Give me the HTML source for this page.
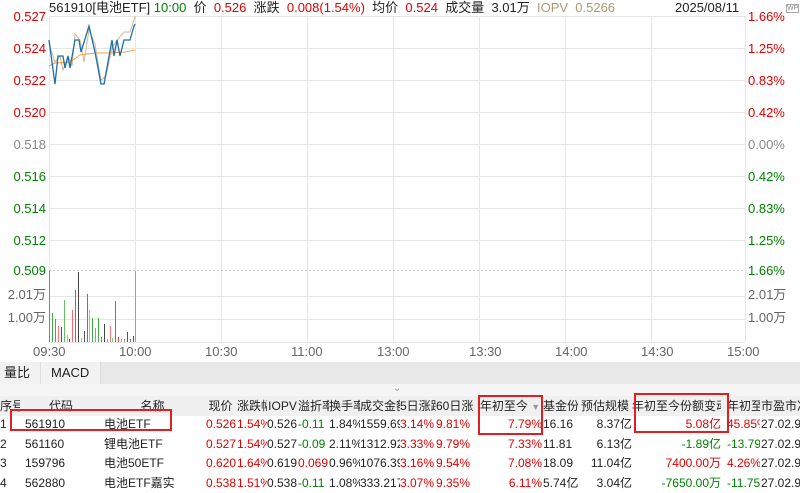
<!DOCTYPE html>
<html><head><meta charset="utf-8"><style>
body{margin:0;width:800px;height:488px;overflow:hidden;background:#fff;font-family:"Liberation Sans","Noto Sans CJK SC",sans-serif;position:relative}
.a{position:absolute;white-space:nowrap;font-size:12px;line-height:14px}
.l{position:absolute;white-space:nowrap;font-size:13px;line-height:14px;width:46px;text-align:right;left:0}
.r{color:#e00000}.g{color:#008000}.k{color:#222}.gy{color:#666}
.c{position:absolute;overflow:hidden;white-space:nowrap;font-size:12px;height:19px;line-height:19px}
</style></head><body>
<svg width="800" height="362" style="position:absolute;left:0;top:0">
<g stroke="#e6e6e6" stroke-width="1">
<line x1="49" y1="16.5" x2="745" y2="16.5"/><line x1="49" y1="48.5" x2="745" y2="48.5"/><line x1="49" y1="80.5" x2="745" y2="80.5"/><line x1="49" y1="112.5" x2="745" y2="112.5"/><line x1="49" y1="144.5" x2="745" y2="144.5"/><line x1="49" y1="176.5" x2="745" y2="176.5"/><line x1="49" y1="208.5" x2="745" y2="208.5"/><line x1="49" y1="240.5" x2="745" y2="240.5"/>
<line x1="49" y1="296.5" x2="745" y2="296.5"/><line x1="49" y1="319.5" x2="745" y2="319.5"/><line x1="49" y1="342.5" x2="745" y2="342.5"/>
<line x1="49.5" y1="16" x2="49.5" y2="342"/><line x1="135.5" y1="16" x2="135.5" y2="342"/><line x1="221.5" y1="16" x2="221.5" y2="342"/><line x1="307.5" y1="16" x2="307.5" y2="342"/><line x1="393.5" y1="16" x2="393.5" y2="342"/><line x1="479.5" y1="16" x2="479.5" y2="342"/><line x1="565.5" y1="16" x2="565.5" y2="342"/><line x1="651.5" y1="16" x2="651.5" y2="342"/><line x1="745.5" y1="16" x2="745.5" y2="342"/>
</g>
<line x1="49" y1="270.5" x2="745" y2="270.5" stroke="#ccc" stroke-dasharray="2,2"/>
<polyline fill="none" stroke="#ccb89a" stroke-width="1" points="49,44 55,62 60,56 63,70 68,56 72,66 75,34 80,40 84,62 89,30 95,44 101,80 106,76 112,48 117,40 124,32 130,32 134,20 135,16"/>
<polyline fill="none" stroke="#f5a040" stroke-width="1" points="49,66 55,63 70,62 80,55 95,53 110,53 125,52 135,50"/>
<polyline fill="none" stroke="#1f6fa8" stroke-width="1.3" points="49,40 55,84 58,56 63,56 65,68 68,56 70,68 75,40 79,40 81,52 89,26 95,52 101,84 104,84 112,40 114,56 117,40 120,56 124,40 130,40 134,26 135,24"/>
<g stroke-width="1">
<line x1="49.5" y1="342" x2="49.5" y2="271" stroke="#e55"/>
<line x1="52.5" y1="342" x2="52.5" y2="313" stroke="#4a4"/>
<line x1="55.5" y1="342" x2="55.5" y2="319" stroke="#4a4"/>
<line x1="58.5" y1="342" x2="58.5" y2="326" stroke="#f77"/>
<line x1="61.5" y1="342" x2="61.5" y2="327" stroke="#555"/>
<line x1="64.5" y1="342" x2="64.5" y2="300" stroke="#6b6"/>
<line x1="67.5" y1="342" x2="67.5" y2="335" stroke="#f99"/>
<line x1="69.5" y1="342" x2="69.5" y2="339" stroke="#555"/>
<line x1="72.5" y1="342" x2="72.5" y2="310" stroke="#f66"/>
<line x1="75.5" y1="342" x2="75.5" y2="290" stroke="#e44"/>
<line x1="78.5" y1="342" x2="78.5" y2="272" stroke="#444"/>
<line x1="81.5" y1="342" x2="81.5" y2="338" stroke="#8c8"/>
<line x1="84.5" y1="342" x2="84.5" y2="331" stroke="#555"/>
<line x1="87.5" y1="342" x2="87.5" y2="294" stroke="#e44"/>
<line x1="89.5" y1="342" x2="89.5" y2="310" stroke="#f99"/>
<line x1="92.5" y1="342" x2="92.5" y2="318" stroke="#4a4"/>
<line x1="95.5" y1="342" x2="95.5" y2="328" stroke="#6b6"/>
<line x1="98.5" y1="342" x2="98.5" y2="318" stroke="#4a4"/>
<line x1="101.5" y1="342" x2="101.5" y2="337" stroke="#4a4"/>
<line x1="104.5" y1="342" x2="104.5" y2="324" stroke="#444"/>
<line x1="107.5" y1="342" x2="107.5" y2="339" stroke="#f77"/>
<line x1="110.5" y1="342" x2="110.5" y2="326" stroke="#f77"/>
<line x1="112.5" y1="342" x2="112.5" y2="338" stroke="#8c8"/>
<line x1="115.5" y1="342" x2="115.5" y2="301" stroke="#777"/>
<line x1="118.5" y1="342" x2="118.5" y2="337" stroke="#e44"/>
<line x1="121.5" y1="342" x2="121.5" y2="339" stroke="#f77"/>
<line x1="124.5" y1="342" x2="124.5" y2="339" stroke="#6b6"/>
<line x1="127.5" y1="342" x2="127.5" y2="332" stroke="#555"/>
<line x1="130.5" y1="342" x2="130.5" y2="339" stroke="#777"/>
<line x1="133.5" y1="342" x2="133.5" y2="336" stroke="#555"/>
<line x1="135.5" y1="342" x2="135.5" y2="271" stroke="#f77"/>
</g>
</svg>
<div class="a" style="left:49px;top:1px;font-size:13px"><span class="k">561910[电池ETF]</span> <span class="g">10:00</span> &nbsp;<span class="k">价</span> &nbsp;<span class="r">0.526</span> &nbsp;<span class="k">涨跌</span> &nbsp;<span class="r">0.008(1.54%)</span> &nbsp;<span class="k">均价</span> &nbsp;<span class="r">0.524</span> &nbsp;<span class="k">成交量</span> &nbsp;<span class="k">3.01万</span> &nbsp;<span style="color:#b09a70">IOPV &nbsp;0.5266</span></div>
<div class="a k" style="left:675px;top:1px;font-size:13px">2025/08/11</div>
<div class="a" style="left:786px;top:4px;font-size:7px;color:#888;border:1px solid #aaa;line-height:7px">WP</div>
<div class="l r" style="top:10px">0.527</div>
<div class="l r" style="top:42px">0.524</div>
<div class="l r" style="top:74px">0.522</div>
<div class="l r" style="top:106px">0.520</div>
<div class="l" style="top:138px;color:#888">0.518</div>
<div class="l g" style="top:170px">0.516</div>
<div class="l g" style="top:202px">0.514</div>
<div class="l g" style="top:234px">0.512</div>
<div class="l g" style="top:264px">0.509</div>
<div class="l gy" style="top:288px">2.01万</div>
<div class="l gy" style="top:311px">1.00万</div>
<div class="a r" style="left:748px;top:10px;font-size:13px">1.66%</div>
<div class="a r" style="left:748px;top:42px;font-size:13px">1.25%</div>
<div class="a r" style="left:748px;top:74px;font-size:13px">0.83%</div>
<div class="a r" style="left:748px;top:106px;font-size:13px">0.42%</div>
<div class="a" style="left:748px;top:138px;font-size:13px;color:#888">0.00%</div>
<div class="a g" style="left:748px;top:170px;font-size:13px">0.42%</div>
<div class="a g" style="left:748px;top:202px;font-size:13px">0.83%</div>
<div class="a g" style="left:748px;top:234px;font-size:13px">1.25%</div>
<div class="a g" style="left:748px;top:264px;font-size:13px">1.66%</div>
<div class="a gy" style="left:748px;top:288px;font-size:13px">2.01万</div>
<div class="a gy" style="left:748px;top:311px;font-size:13px">1.00万</div>
<div class="a gy" style="left:33px;top:345px;font-size:13px">09:30</div>
<div class="a gy" style="left:119px;top:345px;font-size:13px">10:00</div>
<div class="a gy" style="left:205px;top:345px;font-size:13px">10:30</div>
<div class="a gy" style="left:291px;top:345px;font-size:13px">11:00</div>
<div class="a gy" style="left:377px;top:345px;font-size:13px">13:00</div>
<div class="a gy" style="left:469px;top:345px;font-size:13px">13:30</div>
<div class="a gy" style="left:555px;top:345px;font-size:13px">14:00</div>
<div class="a gy" style="left:641px;top:345px;font-size:13px">14:30</div>
<div class="a gy" style="left:727px;top:345px;font-size:13px">15:00</div>
<div style="position:absolute;left:0;top:362px;width:800px;height:22px;background:#e8e8e8"></div>
<div style="position:absolute;left:0;top:362px;width:40px;height:22px;background:#f2f2f2;border-right:1px solid #ddd"></div>
<div style="position:absolute;left:41px;top:362px;width:59px;height:22px;background:#f2f2f2;border-right:1px solid #ddd"></div>
<div class="a k" style="left:4px;top:366px;font-size:13px">量比</div>
<div class="a k" style="left:51px;top:366px;font-size:13px">MACD</div>
<div style="position:absolute;left:0;top:384px;width:800px;height:12px;background:#f5f5f5"></div>
<div class="a" style="left:393px;top:382px;font-size:10px;color:#999">⌄</div>
<div style="position:absolute;left:0;top:396px;width:800px;height:20px;background:#f0f0f0"></div>
<div id="t"></div>
<script>
var cols=[[0,20,'l'],[22,78,'c'],[100,105,'c'],[205,31,'r'],[237,30,'l'],[267,31,'l'],[298,31,'l'],[329,31,'l'],[360,40,'l'],[400,36,'l'],[436,37,'l'],[478,64,'r'],[543,35,'l'],[578,54,'r'],[632,89,'r'],[727,33,'l'],[761,39,'l']];
var hdr=['序号','代码','名称','现价','涨跌幅','IOPV','溢折率','换手率','成交金额','5日涨跌','60日涨','年初至今 <span style="color:#999;font-size:9px">▼</span>','基金份','预估规模','年初至今份额变动','年初至今','市盈市净'];
var R='r',G='g',K='k';
var rows=[
[['1',K],['561910',K],['电池ETF',K],['0.526',R],['1.54%',R],['0.526',K],['-0.11',G],['1.84%',K],['1559.69',K],['3.14%',R],['9.81%',R],['7.79%',R],['16.16',K],['8.37亿',K],['5.08亿',R],['45.85%',R],['27.02.9',K]],
[['2',K],['561160',K],['锂电池ETF',K],['0.527',R],['1.54%',R],['0.527',K],['-0.09',G],['2.11%',K],['1312.92',K],['3.33%',R],['9.79%',R],['7.33%',R],['11.81',K],['6.13亿',K],['-1.89亿',G],['-13.79%',G],['27.02.9',K]],
[['3',K],['159796',K],['电池50ETF',K],['0.620',R],['1.64%',R],['0.619',K],['0.069',R],['0.96%',K],['1076.39',K],['3.16%',R],['9.54%',R],['7.08%',R],['18.09',K],['11.04亿',K],['7400.00万',R],['4.26%',R],['27.02.9',K]],
[['4',K],['562880',K],['电池ETF嘉实',K],['0.538',R],['1.51%',R],['0.538',K],['-0.11',G],['1.08%',K],['333.217',K],['3.07%',R],['9.35%',R],['6.11%',R],['5.74亿',K],['3.04亿',K],['-7650.00万',G],['-11.75%',G],['27.02.9',K]]];
var h='';
function cell(i,top,txt,cls){var c=cols[i];var al=c[2]=='r'?'right':'left';var pad=(i==1?'padding-left:3px;':'')+(i==2?'padding-left:4px;':'');
h+='<div class="c '+cls+'" style="left:'+c[0]+'px;top:'+top+'px;width:'+c[1]+'px;text-align:'+al+';'+pad+'">'+txt+'</div>';}
hdr.forEach(function(t,i){var c=cols[i];h+='<div class="c k" style="left:'+c[0]+'px;top:397px;width:'+c[1]+'px;text-align:center">'+t+'</div>';});
rows.forEach(function(r,j){r.forEach(function(v,i){cell(i,415+j*19.5,v[0],v[1]);});});
document.getElementById('t').innerHTML=h;
</script>
<div style="position:absolute;left:10px;top:409px;width:162px;height:22px;border:2px solid #e02020;box-sizing:border-box"></div>
<div style="position:absolute;left:478px;top:395px;width:65px;height:40px;border:2px solid #e02020;box-sizing:border-box"></div>
<div style="position:absolute;left:634px;top:393px;width:95px;height:40px;border:2px solid #e02020;box-sizing:border-box"></div>
</body></html>
